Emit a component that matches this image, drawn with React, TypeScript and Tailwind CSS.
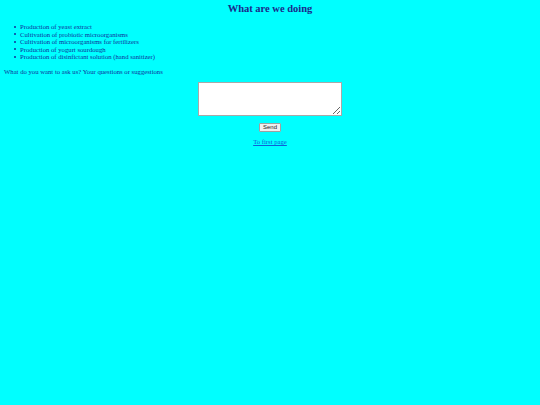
export default function App() {
  const items = [
    "Production of yeast extract",
    "Cultivation of probiotic microorganisms",
    "Cultivation of microorganisms for fertilizers",
    "Production of yogurt sourdough",
    "Production of disinfictant solution (hand sanitizer)",
  ];

  return (
    <div className="min-h-[405px] w-full bg-[#00ffff] px-[4px] pt-[3px] font-['Liberation_Serif',serif] text-[#10309a]">
      <h2 className="text-center text-[10.5px] font-bold leading-[12px] text-[#1a2a8a]">What are we doing</h2>

      <ul className="mt-[8px] pl-[10px] text-[6.7px] leading-[7.5px]">
        {items.map((item) => (
          <li key={item} className="flex items-center">
            <span className="mr-[4px] h-[2px] w-[2px] rounded-full bg-[#10309a]" />
            {item}
          </li>
        ))}
      </ul>

      <p className="mt-[7px] text-[6.7px] leading-[7.5px]">What do you want to ask us? Your questions or suggestions</p>

      <div className="mt-[7px] flex flex-col items-center">
        <textarea className="h-[34px] w-[144px] resize-y border border-[#a8a8a8] bg-white" />
        <button className="mt-[7px] h-[9px] rounded-[1px] border border-[#a0a0a0] bg-[#f0f0f0] px-[3px] font-['Liberation_Sans',sans-serif] text-[6px] leading-[7px] text-[#222]">
          Send
        </button>
        <a href="#" className="mt-[6px] text-[6.7px] leading-[7.5px] text-[#1060d8] underline">
          To first page
        </a>
      </div>
    </div>
  );
}
